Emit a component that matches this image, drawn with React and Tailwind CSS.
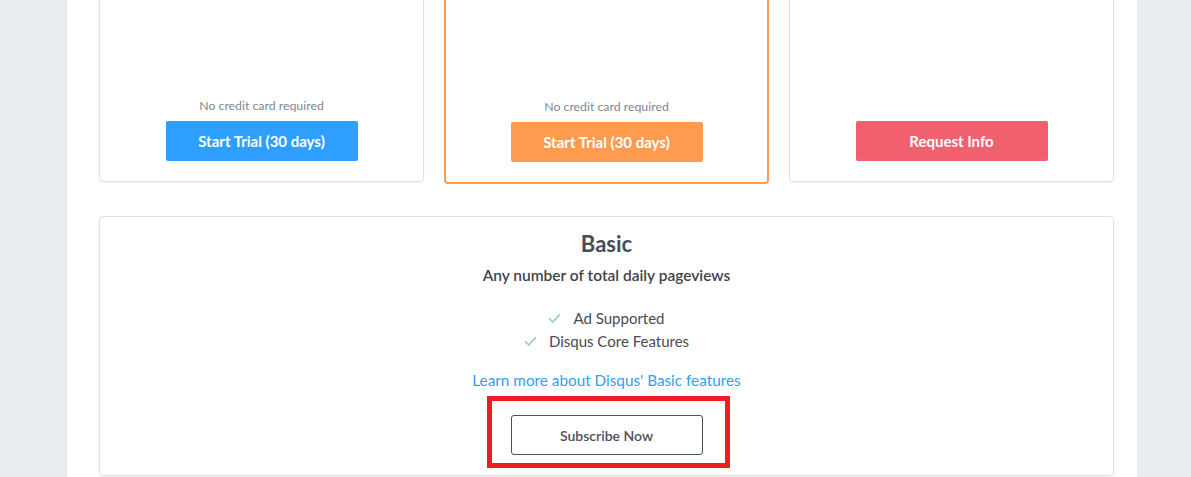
import React from "react";

function Check() {
  return (
    <svg width="13" height="11" viewBox="0 0 13 11" fill="none" className="shrink-0">
      <path d="M1.5 5.8 L4.8 9 L11.5 1.8" stroke="#8fd19e" strokeWidth="1.6" strokeLinecap="round" strokeLinejoin="round" />
    </svg>
  );
}

export default function App() {
  return (
    <div className="h-[477px] overflow-hidden bg-[#e9edf2] flex pl-[66px]" style={{ fontFamily: "Lato, 'Noto Sans', sans-serif" }}>
      <div className="w-[1071px] shrink-0 bg-white border-l border-[#dfe4ea] h-full pl-[32px] pr-[23px]">
        <div className="grid grid-cols-3 gap-5 items-start -mt-[20px]">
          <div className="h-[202px] rounded-[4px] border border-[#dde2e8] shadow-[0_1px_2px_rgba(0,0,0,0.06)] flex flex-col justify-end items-center pb-5">
            <div className="text-[12.3px] leading-[16px] text-[#7d8794]">No credit card required</div>
            <button className="mt-[7px] w-[192px] h-[40px] rounded-[2px] bg-[#2e9fff] text-white text-[15px] font-bold">Start Trial (30 days)</button>
          </div>
          <div className="h-[204px] rounded-[4px] border-2 border-[#ff9a4e] flex flex-col justify-end items-center pb-5">
            <div className="text-[12.3px] leading-[16px] text-[#7d8794]">No credit card required</div>
            <button className="mt-[7px] w-[192px] h-[40px] rounded-[2px] bg-[#ff9b4f] text-white text-[15px] font-bold">Start Trial (30 days)</button>
          </div>
          <div className="h-[202px] rounded-[4px] border border-[#dde2e8] shadow-[0_1px_2px_rgba(0,0,0,0.06)] flex flex-col justify-end items-center pb-5">
            <button className="w-[192px] h-[40px] rounded-[2px] bg-[#f0606f] text-white text-[15px] font-bold">Request Info</button>
          </div>
        </div>
        <div className="mt-8 h-[260px] rounded-[4px] border border-[#dde2e8] shadow-[0_1px_2px_rgba(0,0,0,0.06)] flex flex-col items-center pt-[13px]">
          <div className="text-[22px] leading-[28px] font-bold text-[#464c59]">Basic</div>
          <div className="mt-[7px] text-[15.5px] leading-[20px] font-semibold text-[#3f4450]">Any number of total daily pageviews</div>
          <div className="mt-[23px] flex flex-col items-center gap-[3px] text-[15px] leading-[20px] text-[#474c57]">
            <div className="flex items-center gap-[12px]"><Check /><span>Ad Supported</span></div>
            <div className="flex items-center gap-[12px]"><Check /><span>Disqus Core Features</span></div>
          </div>
          <a className="mt-[19px] text-[15.3px] leading-[20px] text-[#2ea1f5]">Learn more about Disqus' Basic features</a>
          <div className="relative mt-[25px]">
            <button className="w-[192px] h-[40px] rounded-[3px] border border-[#4b505b] bg-white text-[14px] font-semibold text-[#4b505b]">Subscribe Now</button>
            <div className="absolute -left-[24px] -right-[27px] -top-[19px] -bottom-[13px] border-[5px] border-[#ee1c25] pointer-events-none"></div>
          </div>
        </div>
      </div>
    </div>
  );
}
